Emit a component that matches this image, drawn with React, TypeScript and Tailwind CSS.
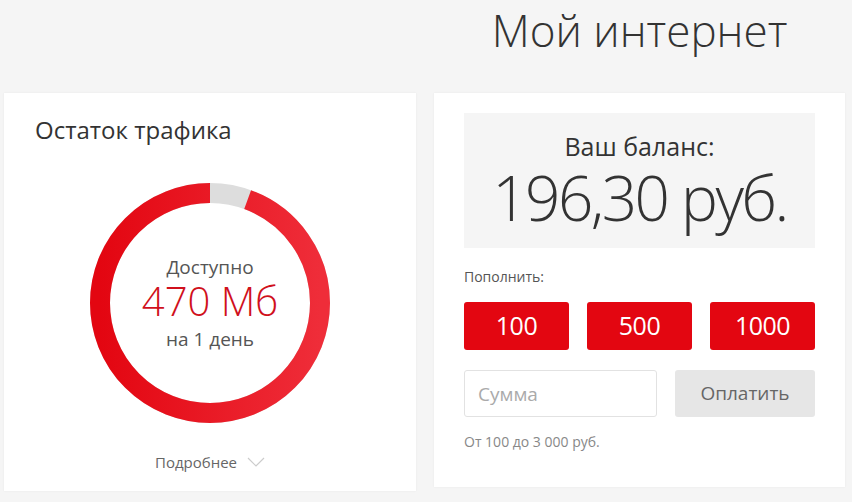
import { useState } from 'react';

const font = { fontFamily: '"Open Sans", "Liberation Sans", sans-serif' };

function Donut() {
  // 240px circle, 20px ring, ~20deg gray gap from 12 o'clock
  const r = 110;
  const c = 2 * Math.PI * r;
  const gray = (20 / 360) * c;
  return (
    <svg width="240" height="240" viewBox="0 0 240 240" className="absolute inset-0">
      <defs>
        <linearGradient id="ring" x1="0" y1="0" x2="0" y2="1">
          <stop offset="0%" stopColor="#e30611" />
          <stop offset="100%" stopColor="#ef2d39" />
        </linearGradient>
      </defs>
      <g transform="rotate(-90 120 120)">
        <circle cx="120" cy="120" r={r} fill="none" stroke="#dddddd" strokeWidth="20" />
        <circle
          cx="120"
          cy="120"
          r={r}
          fill="none"
          stroke="url(#ring)"
          strokeWidth="20"
          strokeDasharray={`${c - gray} ${c}`}
          strokeDashoffset={-gray}
        />
      </g>
    </svg>
  );
}

function TrafficCard() {
  return (
    <div className="bg-white h-[398px] shadow-[0_0_2px_rgba(0,0,0,0.06)] flex flex-col">
      <h2 className="text-[24px] leading-none text-[#333] pl-[31px] pt-[25px]">Остаток трафика</h2>
      <div className="relative w-[240px] h-[240px] mt-[41px] ml-[86px]">
        <Donut />
        <div className="absolute inset-0 flex flex-col items-center justify-center">
          <div className="text-[19px] leading-[24px] text-[#555]">Доступно</div>
          <div className="text-[40px] leading-none my-[2px] font-light text-[#d0101c]">470 Мб</div>
          <div className="text-[19px] leading-[24px] text-[#555] mt-[4px]">на 1 день</div>
        </div>
      </div>
      <div className="flex items-center justify-center gap-[10px] mt-[28px] text-[15px] text-[#666]">
        <span>Подробнее</span>
        <svg width="18" height="10" viewBox="0 0 18 10">
          <path d="M1 1 L9 9 L17 1" fill="none" stroke="#cccccc" strokeWidth="1.2" />
        </svg>
      </div>
    </div>
  );
}

function BalanceCard() {
  const [sum, setSum] = useState<string>('');
  return (
    <div className="bg-white h-[394px] shadow-[0_0_2px_rgba(0,0,0,0.06)] px-[30px] pt-[20px]">
      <div className="bg-[#f5f5f5] h-[135px] flex flex-col items-center pt-[18px]">
        <div className="text-[25px] leading-[30px] text-[#333]">Ваш баланс:</div>
        <div className="text-[62px] leading-none mt-[5px] font-light text-[#333] tracking-[-2.5px]">196,30 руб.</div>
      </div>
      <div className="text-[14px] text-[#555] mt-[18px]">Пополнить:</div>
      <div className="grid grid-cols-3 gap-[18px] mt-[15px]">
        {['100', '500', '1000'].map((v) => (
          <button key={v} className="h-[48px] rounded-[3px] bg-[#e30611] text-white text-[25px] tracking-[-0.5px]" style={font}>
            {v}
          </button>
        ))}
      </div>
      <div className="grid grid-cols-[193px_140px] gap-[18px] mt-[20px]">
        <input
          value={sum}
          onChange={(e) => setSum(e.target.value)}
          placeholder="Сумма"
          className="h-[47px] border border-[#e2e2e2] rounded-[3px] px-[13px] text-[19px] text-[#333] placeholder:text-[#aaa] outline-none"
          style={font}
        />
        <button className="h-[47px] rounded-[3px] bg-[#e6e6e6] text-[19px] text-[#666]" style={font}>
          Оплатить
        </button>
      </div>
      <div className="text-[14px] text-[#888] mt-[14px]">От 100 до 3 000 руб.</div>
    </div>
  );
}

export default function App() {
  return (
    <div className="min-h-screen bg-[#f5f5f5] px-[4px]" style={font}>
      <div className="grid grid-cols-[412px_411px] gap-x-[18px]">
        <div />
        <h1 className="h-[93px] text-center text-[44px] font-light text-[#333] leading-[60px]">Мой интернет</h1>
        <TrafficCard />
        <BalanceCard />
      </div>
    </div>
  );
}
